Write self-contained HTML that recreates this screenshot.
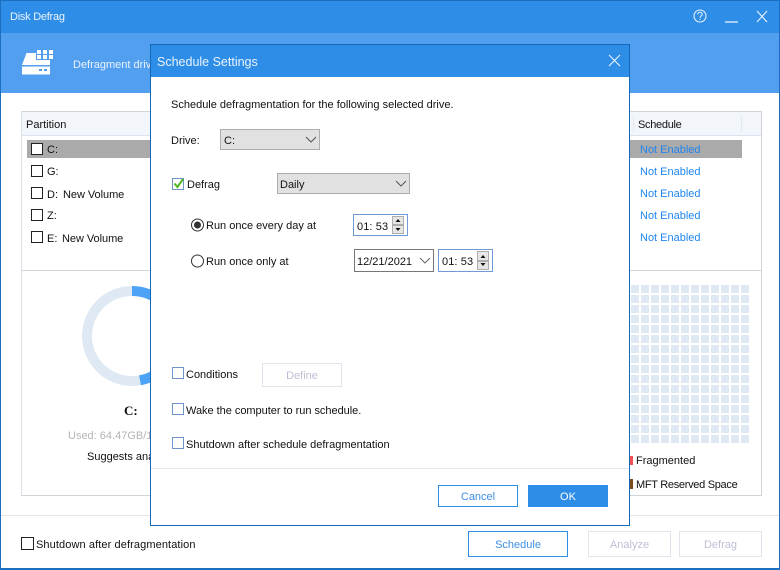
<!DOCTYPE html>
<html><head><meta charset="utf-8"><style>
html,body{margin:0;padding:0;background:#fff}
#r{position:relative;width:780px;height:570px;overflow:hidden;background:#fff;font-family:"Liberation Sans",sans-serif;font-size:11px;color:#111}
#r div,#r span.t{position:absolute;box-sizing:border-box}
.t{white-space:nowrap;line-height:14px;letter-spacing:0;margin-top:1px}
.cb{width:12px;height:12px;border:1px solid #222;background:#fff}
.cd{width:12px;height:12px;border:1px solid #6f94c9;background:#fff}
.ne{color:#1f86f0;left:640px}
.sel{background:#e1e1e1;border:1px solid #adadad}
.sp{background:#e6e6e6;border:1px solid #adadad}
.time{border:1px solid #6f9ad8;background:#fff}
.btn{border:1px solid #2e8de6;color:#3d8fe6;text-align:center;line-height:26px;background:#fff}
.dis{border:1px solid #e1e4ec;color:#bdbfd6;text-align:center;line-height:26px;background:#fff}
</style></head><body><div id="r">
<div style="left:0;top:0;width:780px;height:33px;background:#2e8de6"></div>
<div style="left:0;top:33px;width:780px;height:60px;background:#529fef"></div>
<span class="t" style="left:10px;top:9px;color:#eaf3fd;letter-spacing:-.25px">Disk Defrag</span>
<svg style="position:absolute;left:691px;top:8px" width="80" height="18" fill="none" stroke="#e8f2fc" stroke-width="1.1"><circle cx="9" cy="8" r="6"/><path d="M6.800 6.500c0-3 4.400-3 4.400 0 0 1.500-2.200 1.500-2.200 3.200M9 10.700v1.200"/><path d="M34 14h13" stroke-width="1.300"/><path d="M66 3l10 11M76 3L66 14"/></svg>
<svg style="position:absolute;left:22px;top:49px" width="32" height="26" fill="#fff"><path d="M0 16L4.500 4H14V11H28V16zM0 17.500h28v8H0z"/><g><rect x="15" y="1" width="4" height="4"/><rect x="21" y="1" width="4" height="4"/><rect x="27" y="1" width="4" height="4"/><rect x="15" y="6" width="4" height="4"/><rect x="21" y="6" width="4" height="4"/><rect x="27" y="6" width="4" height="4"/></g><rect x="17" y="20" width="3" height="2" fill="#529fef"/><rect x="22" y="20" width="3" height="2" fill="#529fef"/></svg>
<span class="t" style="left:73px;top:57px;color:#eaf3fd">Defragment drive</span>

<div style="left:21px;top:111px;width:741px;height:385px;border:1px solid #d2d4da;border-left-color:#dcdfe8"></div>
<div style="left:22px;top:112px;width:739px;height:24px;background:#f2f5fa;border-bottom:1px solid #dde3ee"></div>
<div style="left:633px;top:116px;width:1px;height:16px;background:#e3e7ef"></div>
<div style="left:741px;top:116px;width:1px;height:16px;background:#e3e7ef"></div>
<span class="t" style="left:26px;top:117px">Partition</span>
<span class="t" style="left:638px;top:117px;letter-spacing:-.3px">Schedule</span>
<div style="left:27px;top:140px;width:715px;height:18px;background:#aaaaaa"></div>
<div class="cb" style="left:31px;top:143px"></div><span class="t" style="left:47px;top:142px">C:</span>
<div class="cb" style="left:31px;top:165px"></div><span class="t" style="left:47px;top:164px">G:</span>
<div class="cb" style="left:31px;top:187px"></div><span class="t" style="left:47px;top:187px">D:</span><span class="t" style="left:63px;top:187px;letter-spacing:-.05px">New Volume</span>
<div class="cb" style="left:31px;top:209px"></div><span class="t" style="left:47px;top:208px">Z:</span>
<div class="cb" style="left:31px;top:231px"></div><span class="t" style="left:47px;top:231px">E:</span><span class="t" style="left:62px;top:231px;letter-spacing:-.05px">New Volume</span>
<span class="t ne" style="top:142px">Not Enabled</span>
<span class="t ne" style="top:164px">Not Enabled</span>
<span class="t ne" style="top:186px">Not Enabled</span>
<span class="t ne" style="top:208px">Not Enabled</span>
<span class="t ne" style="top:230px">Not Enabled</span>
<div style="left:22px;top:270px;width:739px;height:1px;background:#d2d4da"></div>
<svg style="position:absolute;left:80px;top:284px" width="104" height="104" fill="none" stroke-width="10"><circle cx="52" cy="52" r="45" stroke="#dfe9f4"/><path d="M52 7A45 45 0 0 1 60 96.300" stroke="#4da3f5"/></svg>
<span class="t" style="left:124px;top:403px;font-family:'Liberation Serif',serif;font-weight:bold;font-size:13px">C:</span>
<span class="t" style="left:68px;top:428px;color:#b4b4b4">Used: 64.47GB/119.24GB</span>
<span class="t" style="left:87px;top:449px">Suggests analyzing first.</span>
<svg style="position:absolute;left:631px;top:285px" width="118" height="158"><defs><pattern id="g" width="10" height="10" patternUnits="userSpaceOnUse"><rect width="8" height="8" fill="#dfe9f4"/></pattern></defs><rect width="118" height="158" fill="url(#g)"/></svg>
<div style="left:630px;top:456px;width:3px;height:9px;background:#f05050"></div>
<span class="t" style="left:636px;top:453px">Fragmented</span>
<div style="left:630px;top:479px;width:3px;height:10px;background:#7c4a1c"></div>
<span class="t" style="left:636px;top:477px;letter-spacing:-.3px">MFT Reserved Space</span>

<div style="left:0;top:515px;width:780px;height:1px;background:#e6e6ea"></div>
<div class="cb" style="left:21px;top:537px;width:13px;height:13px"></div>
<span class="t" style="left:36px;top:537px;letter-spacing:.1px">Shutdown after defragmentation</span>
<div class="btn" style="left:468px;top:531px;width:100px;height:26px">Schedule</div>
<div class="dis" style="left:588px;top:531px;width:83px;height:26px">Analyze</div>
<div class="dis" style="left:679px;top:531px;width:83px;height:26px">Defrag</div>
<div style="left:0;top:0;width:780px;height:570px;border:1px solid #1b6fc0;border-width:1px 1px 2px 1px"></div>

<div style="left:150px;top:44px;width:480px;height:482px;background:#fff;border:1px solid #1468b8"></div>
<div style="left:151px;top:45px;width:478px;height:32px;background:#2e8de6"></div>
<span class="t" style="left:157px;top:54px;color:#eaf3fd;font-size:12.5px">Schedule Settings</span>
<svg style="position:absolute;left:606px;top:52px" width="18" height="18" fill="none" stroke="#eaf3fd" stroke-width="1.100"><path d="M3 3l11 11M14 3L3 14"/></svg>
<span class="t" style="left:171px;top:97px">Schedule defragmentation for the following selected drive.</span>
<span class="t" style="left:171px;top:133px">Drive:</span>
<div class="sel" style="left:220px;top:129px;width:100px;height:21px"></div>
<span class="t" style="left:224px;top:133px">C:</span>
<svg style="position:absolute;left:305px;top:136px" width="12" height="8" fill="none" stroke="#555"><path d="M1 1l5 5 5-5"/></svg>
<div class="cd" style="left:172px;top:178px"></div>
<svg style="position:absolute;left:172px;top:177px" width="13" height="13" fill="none" stroke="#4fb81e" stroke-width="2"><path d="M2.500 6.500l3 3.500 5.500-8"/></svg>
<span class="t" style="left:187px;top:177px">Defrag</span>
<div class="sel" style="left:277px;top:173px;width:133px;height:21px"></div>
<span class="t" style="left:280px;top:177px">Daily</span>
<svg style="position:absolute;left:395px;top:180px" width="12" height="8" fill="none" stroke="#555"><path d="M1 1l5 5 5-5"/></svg>

<svg style="position:absolute;left:190px;top:218px" width="16" height="50" fill="none" stroke="#333"><circle cx="7.500" cy="7" r="6"/><circle cx="7.500" cy="7" r="3.500" fill="#333" stroke="none"/><circle cx="7.500" cy="43" r="6"/></svg>
<span class="t" style="left:206px;top:218px">Run once every day at</span>
<span class="t" style="left:206px;top:254px">Run once only at</span>
<div class="time" style="left:353px;top:214px;width:55px;height:22px"></div>
<span class="t" style="left:357px;top:219px;letter-spacing:.1px">01: 53</span>
<div class="sp" style="left:392px;top:216px;width:12px;height:9px"></div>
<div class="sp" style="left:392px;top:225px;width:12px;height:9px"></div>
<svg style="position:absolute;left:392px;top:216px" width="12" height="18" fill="#111"><path d="M3.500 6L6 3l2.500 3zM3.500 12L6 15l2.500-3z"/></svg>
<div style="left:354px;top:249px;width:80px;height:23px;border:1px solid #777;background:#fff"></div>
<span class="t" style="left:357px;top:254px">12/21/2021</span>
<svg style="position:absolute;left:419px;top:257px" width="12" height="8" fill="none" stroke="#666"><path d="M1 1l5 5 5-5"/></svg>
<div class="time" style="left:438px;top:249px;width:55px;height:23px"></div>
<span class="t" style="left:442px;top:254px;letter-spacing:.1px">01: 53</span>
<div class="sp" style="left:477px;top:251px;width:12px;height:10px"></div>
<div class="sp" style="left:477px;top:261px;width:12px;height:9px"></div>
<svg style="position:absolute;left:477px;top:251px" width="12" height="19" fill="#111"><path d="M3.500 7L6 4l2.500 3zM3.500 12L6 15l2.500-3z"/></svg>

<div class="cd" style="left:172px;top:367px"></div>
<span class="t" style="left:186px;top:367px">Conditions</span>
<div class="dis" style="left:262px;top:363px;width:80px;height:24px;line-height:24px">Define</div>
<div class="cd" style="left:172px;top:403px"></div>
<span class="t" style="left:186px;top:403px;letter-spacing:-.03px">Wake the computer to run schedule.</span>
<div class="cd" style="left:172px;top:437px"></div>
<span class="t" style="left:186px;top:437px">Shutdown after schedule defragmentation</span>
<div style="left:151px;top:468px;width:478px;height:1px;background:#e6e8ef"></div>
<div class="btn" style="left:438px;top:485px;width:80px;height:22px;line-height:22px">Cancel</div>
<div class="btn" style="left:528px;top:485px;width:80px;height:22px;line-height:22px;background:#2e8de6;color:#fff">OK</div>
</div></body></html>
